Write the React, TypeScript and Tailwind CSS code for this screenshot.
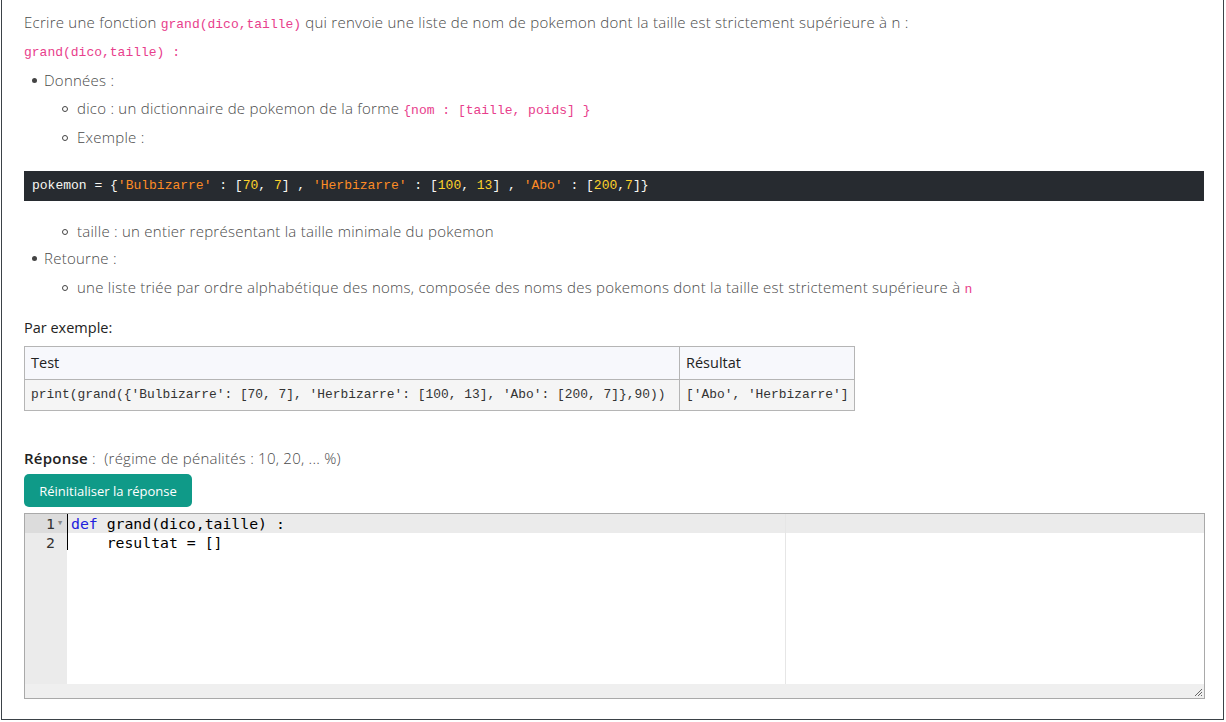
import React from "react";

const TXT = { fontFamily: '"Open Sans", "Lato", sans-serif' };
const MONO = { fontFamily: '"Liberation Mono", "DejaVu Sans Mono", monospace' };
const EDIT = { fontFamily: '"DejaVu Sans Mono", "Liberation Mono", monospace' };

function Code({ children }: { children: React.ReactNode }) {
  return (
    <code className="text-[13px] leading-[14px] tracking-normal text-[#e83e8c]" style={MONO}>
      {children}
    </code>
  );
}

function Dot() {
  return <span className="inline-block align-middle w-[5px] h-[5px] rounded-full bg-[#444] mr-[7px] mb-[2px]" />;
}
function Ring() {
  return <span className="inline-block align-middle w-[6px] h-[6px] rounded-full border border-[#444] mr-[9px] mb-[2px]" />;
}

export default function App() {
  return (
    <div className="w-[1226px] h-[722px] bg-white overflow-hidden text-[#4a4a4a]" style={TXT}>
      <div className="ml-[1px] mr-[2px] h-[720px] border-x border-b border-[#3b4248] pl-[22px] pr-[19px] text-[15px] leading-[20px] tracking-[0.25px] font-light">
        <p className="pt-[12px]">
          Ecrire une fonction <Code>grand(dico,taille)</Code> qui renvoie une liste de nom de pokemon dont la taille est
          strictement supérieure à n :
        </p>
        <p className="mt-[8px]">
          <Code>grand(dico,taille) :</Code>
        </p>
        <div className="mt-[10px] pl-[8px]">
          <Dot />
          Données :
        </div>
        <div className="mt-[8px] pl-[38px]">
          <Ring />
          dico : un dictionnaire de pokemon de la forme <Code>{"{nom : [taille, poids] }"}</Code>
        </div>
        <div className="mt-[9px] pl-[38px]">
          <Ring />
          Exemple :
        </div>
        {/* snippet in the statement: dark theme like highlight.js */}
        <pre
          className="mt-[24px] h-[30px] bg-[#272b30] text-[#f8f8f2] text-[13px] px-[8px] leading-[30px] tracking-normal"
          style={MONO}
        >
          pokemon = {"{"}
          <span className="text-[#fd8c25]">'Bulbizarre'</span> : [<span className="text-[#ffd22b]">70</span>,{" "}
          <span className="text-[#ffd22b]">7</span>] , <span className="text-[#fd8c25]">'Herbizarre'</span> : [
          <span className="text-[#ffd22b]">100</span>, <span className="text-[#ffd22b]">13</span>] ,{" "}
          <span className="text-[#fd8c25]">'Abo'</span> : [<span className="text-[#ffd22b]">200</span>,
          <span className="text-[#ffd22b]">7</span>]{"}"}
        </pre>
        <div className="mt-[20px] pl-[38px]">
          <Ring />
          taille : un entier représentant la taille minimale du pokemon
        </div>
        <div className="mt-[7px] pl-[8px]">
          <Dot />
          Retourne :
        </div>
        <div className="mt-[9px] pl-[38px]">
          <Ring />
          une liste triée par ordre alphabétique des noms, composée des noms des pokemons dont la taille est strictement
          supérieure à <Code>n</Code>
        </div>
        <p className="mt-[21px] text-[#222] font-normal tracking-normal text-[14.5px]">Par exemple:</p>
        <table className="mt-[8px] border-collapse border border-[#b5b5b5] font-normal tracking-normal text-[14.5px]">
          <thead>
            <tr className="bg-[#f7f8fc] text-[#222] h-[33px]">
              <th className="font-normal text-left px-[6px] border border-[#b5b5b5] w-[655px]">Test</th>
              <th className="font-normal text-left px-[6px] border border-[#b5b5b5]">Résultat</th>
            </tr>
          </thead>
          <tbody>
            <tr className="bg-[#f5f5f5] text-[#333] h-[31px] text-[12.9px]" style={MONO}>
              <td className="px-[6px] border border-[#b5b5b5] whitespace-pre">
                print(grand({"{"}'Bulbizarre': [70, 7], 'Herbizarre': [100, 13], 'Abo': [200, 7]{"}"},90))
              </td>
              <td className="px-[6px] border border-[#b5b5b5] whitespace-pre">['Abo', 'Herbizarre']</td>
            </tr>
          </tbody>
        </table>
        <p className="mt-[37px]">
          <span className="font-semibold text-[#222]">Réponse</span> :&nbsp; (régime de pénalités : 10, 20, ... %)
        </p>
        <button className="block mt-[6px] h-[33px] w-[168px] rounded-[5px] bg-[#0f9a88] text-white text-[13px] tracking-normal font-normal text-center">
          Réinitialiser la réponse
        </button>
        {/* answer editor (ace-like) */}
        <div className="mt-[6px] h-[186px] w-[1181px] border border-[#a9a9a9] bg-white flex flex-col relative font-normal tracking-normal">
          <div className="flex flex-1 min-h-0">
            <div className="w-[42px] bg-[#ebebeb] text-[#333] text-[14.8px] leading-[19px]" style={EDIT}>
              <div className="flex justify-end items-center h-[19px] bg-[#dcdcdc] pr-[3px]">
                1<span className="text-[7px] text-[#888] ml-[3px] w-[6px]">▼</span>
              </div>
              <div className="flex justify-end items-center h-[19px] pr-[12px]">2</div>
            </div>
            <div className="flex-1 relative text-[14.8px] leading-[19px] text-black" style={EDIT}>
              <div className="h-[19px] bg-[#ebebeb] whitespace-pre pl-[4px]">
                <span className="text-[#2020dd]">def</span> grand(dico,taille) :
              </div>
              <div className="h-[19px] whitespace-pre pl-[4px]">
                {"    "}resultat = []
              </div>
              <div className="absolute left-0 top-0 w-[1px] h-[36px] bg-black" />
              <div className="absolute left-[718px] top-0 bottom-0 w-[1px] bg-[#e6e6e6]" />
            </div>
          </div>
          <div className="h-[14px] bg-[#efefef]" />
          <svg className="absolute right-[1px] bottom-[1px]" width="9" height="9" viewBox="0 0 9 9">
            <path d="M1 8 L8 1 M4 8 L8 4 M7 8 L8 7" stroke="#666" strokeWidth="1" />
          </svg>
        </div>
      </div>
    </div>
  );
}
